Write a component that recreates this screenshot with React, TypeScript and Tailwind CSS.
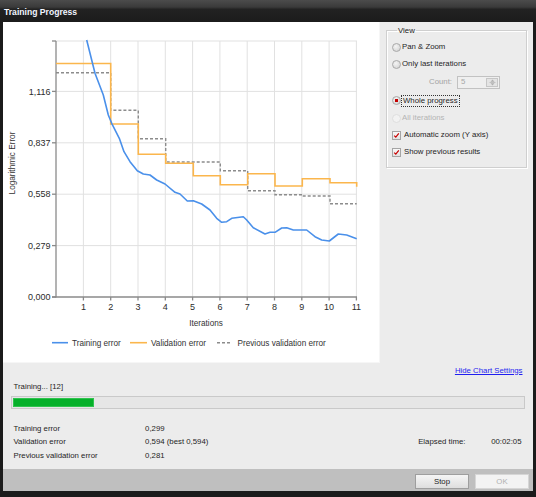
import React from 'react'

const X0 = 56.1
const DX = 27.3
const gx = (i: number) => X0 + DX * i

const yTicks = [
  { y: 297, label: '0,000' },
  { y: 245.6, label: '0,279' },
  { y: 194.2, label: '0,558' },
  { y: 142.8, label: '0,837' },
  { y: 91.4, label: '1,116' },
]

const training = [
  [86.7, 40], [95, 73.3], [103.3, 95], [108.3, 115], [111.7, 123.3], [119.3, 138.3],
  [124, 151.7], [130, 161.7], [137.3, 170.7], [143.3, 174], [150, 175], [156.7, 180],
  [165, 184], [175, 192.3], [180, 194], [187.3, 201], [193.3, 200.7], [201.7, 204],
  [210, 210], [216.7, 218.3], [221.7, 222.3], [226.7, 221.7], [231.7, 218.3],
  [243.3, 216.7], [246.7, 220], [253.3, 227.7], [265, 234], [270, 232.3], [275, 232.3],
  [281.7, 228], [286.7, 227.7], [293.3, 230], [306.7, 230], [315, 236.7], [321.7, 240],
  [329.3, 241], [338.3, 234], [346.7, 235], [356.7, 238.7],
]

const validation =
  'M56,63.5 H110.7 V124 H138.3 V154.3 H165.7 V163.3 H193.3 V175.7 H220.3 V184.7 H247.7 V173.7 H275 V186 H302.3 V178.7 H330 V182.7 H356.7 V186.7'
const previous =
  'M56,72.7 H110.7 V110.3 H138.3 V138.7 H165.7 V162 H220.3 V170.7 H247.7 V190.7 H275 V194.7 H302.3 V196 H330 V203.7 H356.7'

function Chart() {
  return (
    <svg width={377} height={341} viewBox="3 22 377 341" className="block">
      <g stroke="#e1e1e1" strokeWidth={1}>
        <line x1={56} y1={41} x2={357} y2={41} />
        {yTicks.slice(1).map((t) => (
          <line key={t.y} x1={56} y1={t.y} x2={357} y2={t.y} />
        ))}
        {Array.from({ length: 11 }, (_, i) => (
          <line key={i} x1={gx(i + 1)} y1={41} x2={gx(i + 1)} y2={297} />
        ))}
      </g>
      <g stroke="#8a8a8a" strokeWidth={1.3}>
        <line x1={56} y1={41} x2={56} y2={297.5} />
        <line x1={52} y1={297} x2={357} y2={297} />
        <line x1={52} y1={41} x2={56} y2={41} />
        {yTicks.map((t) => (
          <line key={t.y} x1={52} y1={t.y} x2={56} y2={t.y} />
        ))}
        {Array.from({ length: 11 }, (_, i) => (
          <line key={i} x1={gx(i + 1)} y1={297} x2={gx(i + 1)} y2={300.5} />
        ))}
      </g>
      <g fontFamily="'Liberation Sans', Arial, sans-serif" fontSize={9} fill="#2b2b2b">
        {yTicks.map((t) => (
          <text key={t.y} x={50.5} y={t.y + 3.2} textAnchor="end">
            {t.label}
          </text>
        ))}
        {Array.from({ length: 11 }, (_, i) => (
          <text key={i} x={gx(i + 1)} y={309.5} textAnchor="middle">
            {i + 1}
          </text>
        ))}
      </g>
      <g fontFamily="'Liberation Sans', Arial, sans-serif" fontSize={8.2} fill="#333">
        <text x={206} y={326} textAnchor="middle">
          Iterations
        </text>
        <text x={0} y={0} textAnchor="middle" transform="translate(14.5 163) rotate(-90)">
          Logarithmic Error
        </text>
        <text x={72} y={345.5}>Training error</text>
        <text x={151} y={345.5}>Validation error</text>
        <text x={237.5} y={345.5}>Previous validation error</text>
      </g>
      <line x1={52} y1={342.7} x2={68} y2={342.7} stroke="#4a90ea" strokeWidth={1.6} />
      <line x1={130} y1={342.7} x2={147} y2={342.7} stroke="#fbb64c" strokeWidth={1.6} />
      <line x1={217} y1={342.7} x2={232} y2={342.7} stroke="#8c8c8c" strokeWidth={1.4} strokeDasharray="3 2" />
      <path d={previous} fill="none" stroke="#8c8c8c" strokeWidth={1.4} strokeDasharray="3 2" />
      <path d={validation} fill="none" stroke="#fbb64c" strokeWidth={1.6} />
      <polyline
        points={training.map((p) => p.join(',')).join(' ')}
        fill="none"
        stroke="#4a90ea"
        strokeWidth={1.6}
        strokeLinejoin="round"
      />
    </svg>
  )
}

function Radio({ checked, disabled }: { checked?: boolean; disabled?: boolean }) {
  return (
    <span
      className={`w-[9px] h-[9px] rounded-full shrink-0 flex items-center justify-center border ${
        disabled
          ? 'border-[#dedede] bg-[#f2f2f2]'
          : 'border-[#a9a9a9] bg-[radial-gradient(circle_at_40%_35%,#f4f4f4,#cfcfcf)]'
      }`}
    >
      {checked && <span className="w-[3.5px] h-[3.5px] bg-[#c40000]" />}
    </span>
  )
}

function Check() {
  return (
    <span className="w-[9px] h-[9px] shrink-0 border border-[#a5a5a5] bg-[linear-gradient(#f8f8f8,#e2e2e2)] flex items-center justify-center">
      <svg width="7" height="7" viewBox="0 0 7 7">
        <path d="M1.2 3.6 L2.8 5.2 L5.8 1.4" fill="none" stroke="#c80000" strokeWidth={1.2} />
      </svg>
    </span>
  )
}

function ViewGroup() {
  return (
    <fieldset className="w-[141px] h-[142px] border border-[#cfcfcf] shadow-[inset_1px_1px_0_#fff,1px_1px_0_#fff] px-[5px] pb-0">
      <legend className="ml-[5px] px-[1px] text-[7.8px] leading-[9px] text-[#222]">View</legend>
      <div className="flex flex-col pt-[3.5px] text-[7.8px] text-[#1e1e1e]">
        <div className="h-[17px] flex items-center">
          <Radio />
          <span className="ml-[1px]">Pan &amp; Zoom</span>
        </div>
        <div className="h-[17px] flex items-center">
          <Radio />
          <span className="ml-[1px]">Only last iterations</span>
        </div>
        <div className="h-[19px] flex items-center">
          <span className="ml-[37px] w-[28px] text-[#a4a4a4]">Count:</span>
          <div className="w-[43px] h-[13px] border border-[#c2c2c2] bg-[#efefef] flex items-center justify-between pl-[3px] pr-[1px]">
            <span className="text-[#a8a8a8]">5</span>
            <span className="w-[12px] h-[9px] border border-[#c6c6c6] bg-[#e4e4e4] flex items-center justify-center">
              <svg width="7" height="7" viewBox="0 0 7 7">
                <path d="M3.5 0.5 L5.5 2.8 H1.5 Z M3.5 6.5 L5.5 4.2 H1.5 Z" fill="#b0b0b0" />
                <path d="M0.5 3.5 H6.5" stroke="#b8b8b8" strokeWidth={0.8} />
              </svg>
            </span>
          </div>
        </div>
        <div className="h-[18px] flex items-center">
          <Radio checked />
          <span className="ml-[0px] px-[1px] border border-dotted border-[#333] leading-[10px]">Whole progress</span>
        </div>
        <div className="h-[17px] flex items-center">
          <Radio disabled />
          <span className="ml-[1px] text-[#b4b4b4]">All iterations</span>
        </div>
        <div className="h-[17px] flex items-center">
          <Check />
          <span className="ml-[3px]">Automatic zoom (Y axis)</span>
        </div>
        <div className="h-[17px] flex items-center">
          <Check />
          <span className="ml-[3px]">Show previous results</span>
        </div>
      </div>
    </fieldset>
  )
}

export default function App() {
  return (
    <div className="w-[536px] h-[497px] bg-[#1b1b1b] flex flex-col font-['Liberation_Sans',Arial,sans-serif] overflow-hidden">
      <div className="h-[22px] shrink-0 bg-[linear-gradient(#4c4c4c_0%,#3a3a3a_32%,#222_42%,#1c1c1c_100%)] pl-[4px] pt-[2px] flex items-center text-[8.6px] font-bold text-[#f2f5ff]">
        Training Progress
      </div>
      <div className="flex-1 mx-[3px] mb-[6px] bg-[#ececec] flex flex-col">
        <div className="flex h-[341px] shrink-0">
          <div className="w-[377px] bg-white border-r border-b border-[#f6f6f6]">
            <Chart />
          </div>
          <div className="pl-[6px] pt-[4px]">
            <ViewGroup />
          </div>
        </div>
        <div className="h-[15px] flex items-center justify-end pr-[10.5px]">
          <span className="text-[7.8px] text-[#1f1ff0] underline">Hide Chart Settings</span>
        </div>
        <div className="h-[18px] flex items-center pl-[10.5px] text-[7.8px] text-[#1e1e1e]">Training... [12]</div>
        <div className="mx-[8px] h-[13px] border border-[#c9c9c9] bg-[#e6e6e6] p-[1px]">
          <div className="w-[81px] h-full bg-[#06b02a] border border-[#2fc34e]" />
        </div>
        <div className="flex items-center mt-[13px] pl-[10.5px] pr-[11.5px] text-[7.8px] text-[#1e1e1e]">
          <div className="grid grid-cols-[131.6px_auto] auto-rows-[13.4px] items-center">
            <span>Training error</span>
            <span>0,299</span>
            <span>Validation error</span>
            <span>0,594 (best 0,594)</span>
            <span>Previous validation error</span>
            <span>0,281</span>
          </div>
          <div className="ml-auto flex">
            <span className="w-[73px]">Elapsed time:</span>
            <span>00:02:05</span>
          </div>
        </div>
        <div className="flex-1" />
        <div className="h-[22px] shrink-0 bg-[#bfbfbf] flex justify-end items-start pt-[5px] pr-[4px] gap-[6px] text-[7.8px]">
          <div className="w-[54px] h-[15px] border border-[#9e9e9e] bg-[linear-gradient(#f5f5f5,#dedede)] flex items-center justify-center text-[#222]">
            Stop
          </div>
          <div className="w-[54px] h-[15px] border border-[#d6d6d6] bg-[#f3f3f3] flex items-center justify-center text-[#b0b0b0]">
            OK
          </div>
        </div>
      </div>
    </div>
  )
}
